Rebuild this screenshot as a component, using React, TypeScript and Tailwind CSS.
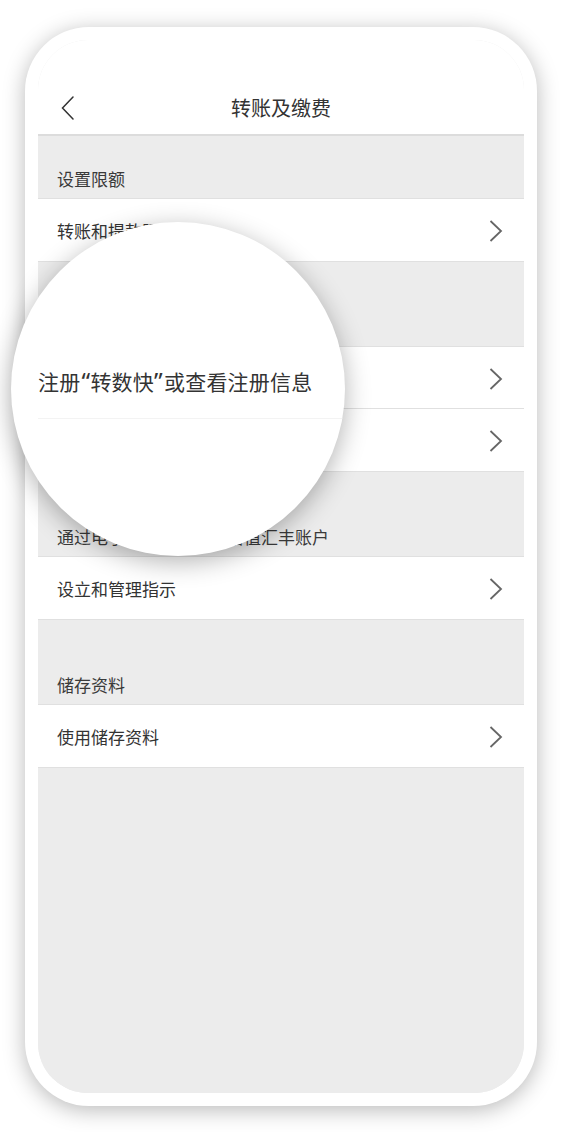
import React from "react";

function ChevronRight() {
  return (
    <svg width="14" height="22" viewBox="0 0 14 22" fill="none" className="mt-[2px]">
      <polyline points="1.5,1 12,11 1.5,21" stroke="#666666" strokeWidth="1.8" strokeLinejoin="miter" strokeLinecap="butt" />
    </svg>
  );
}

function ChevronLeft() {
  return (
    <svg width="14" height="24" viewBox="0 0 14 24" fill="none">
      <polyline points="12,1 1.5,12 12,23" stroke="#333333" strokeWidth="1.5" strokeLinecap="round" />
    </svg>
  );
}

function Row({ text }: { text: string }) {
  return (
    <div className="h-[62px] flex items-center justify-between pl-[19px] pr-[21px] bg-white">
      <span className="pt-[2px] text-[17px] leading-[24px] text-[#333333] whitespace-nowrap">{text}</span>
      <ChevronRight />
    </div>
  );
}

function Label({ text, h }: { text: string; h: string }) {
  return (
    <div className={`${h} flex items-end pb-[7px] pl-[19px] bg-[#ececec]`}>
      <span className="text-[17px] leading-[24px] text-[#3a3a3a] whitespace-nowrap">{text}</span>
    </div>
  );
}

export default function App() {
  return (
    <div className="relative w-[562px] h-[1132px] bg-white pt-[27px] pl-[25px] overflow-hidden font-['Noto_Sans_CJK_SC',sans-serif]">
      <div className="w-[512px] h-[1079px] rounded-[64px] bg-white p-[13px] shadow-[0_4px_22px_rgba(0,0,0,0.28)]">
        <div className="h-full rounded-[50px] overflow-hidden bg-[#ececec] flex flex-col">
          <div className="h-[96px] shrink-0 bg-white border-b-2 border-[#dcdcdc] grid grid-cols-[1fr_auto_1fr] items-end pb-[12px]">
            <div className="pl-[23px] pb-[2px] flex items-center">
              <ChevronLeft />
            </div>
            <span className="text-[20px] leading-[28px] text-[#333333]">转账及缴费</span>
            <div />
          </div>

          <Label text="设置限额" h="h-[62px]" />
          <div className="border-y border-[#e0e0e0]">
            <Row text="转账和提款限额" />
          </div>

          <Label text="" h="h-[84px]" />
          <div className="border-y border-[#e0e0e0] divide-y divide-[#e0e0e0]">
            <Row text="" />
            <Row text="" />
          </div>

          <Label text="通过电子直接付款授权增值汇丰账户" h="h-[84px]" />
          <div className="border-y border-[#e0e0e0]">
            <Row text="设立和管理指示" />
          </div>

          <Label text="储存资料" h="h-[84px]" />
          <div className="border-y border-[#e0e0e0]">
            <Row text="使用储存资料" />
          </div>

          <div className="flex-1 bg-[#ececec]" />
        </div>
      </div>

      <div className="absolute left-[11px] top-[222px] w-[334px] h-[334px] rounded-full bg-white overflow-hidden shadow-[0_6px_26px_rgba(0,0,0,0.3)]">
        <div className="pt-[145px] pl-[27px]">
          <div className="text-[21px] leading-[28px] text-[#333333] whitespace-nowrap tracking-[0.2px]">
            注册<span className="inline-block w-[10px] text-right text-[24px] font-['Noto_Sans',sans-serif]">“</span>转数快<span className="inline-block w-[10px] text-left text-[24px] font-['Noto_Sans',sans-serif]">”</span>或查看注册信息
          </div>
          <div className="mt-[23px] border-t border-[#f3f3f3]" />
        </div>
      </div>
    </div>
  );
}
